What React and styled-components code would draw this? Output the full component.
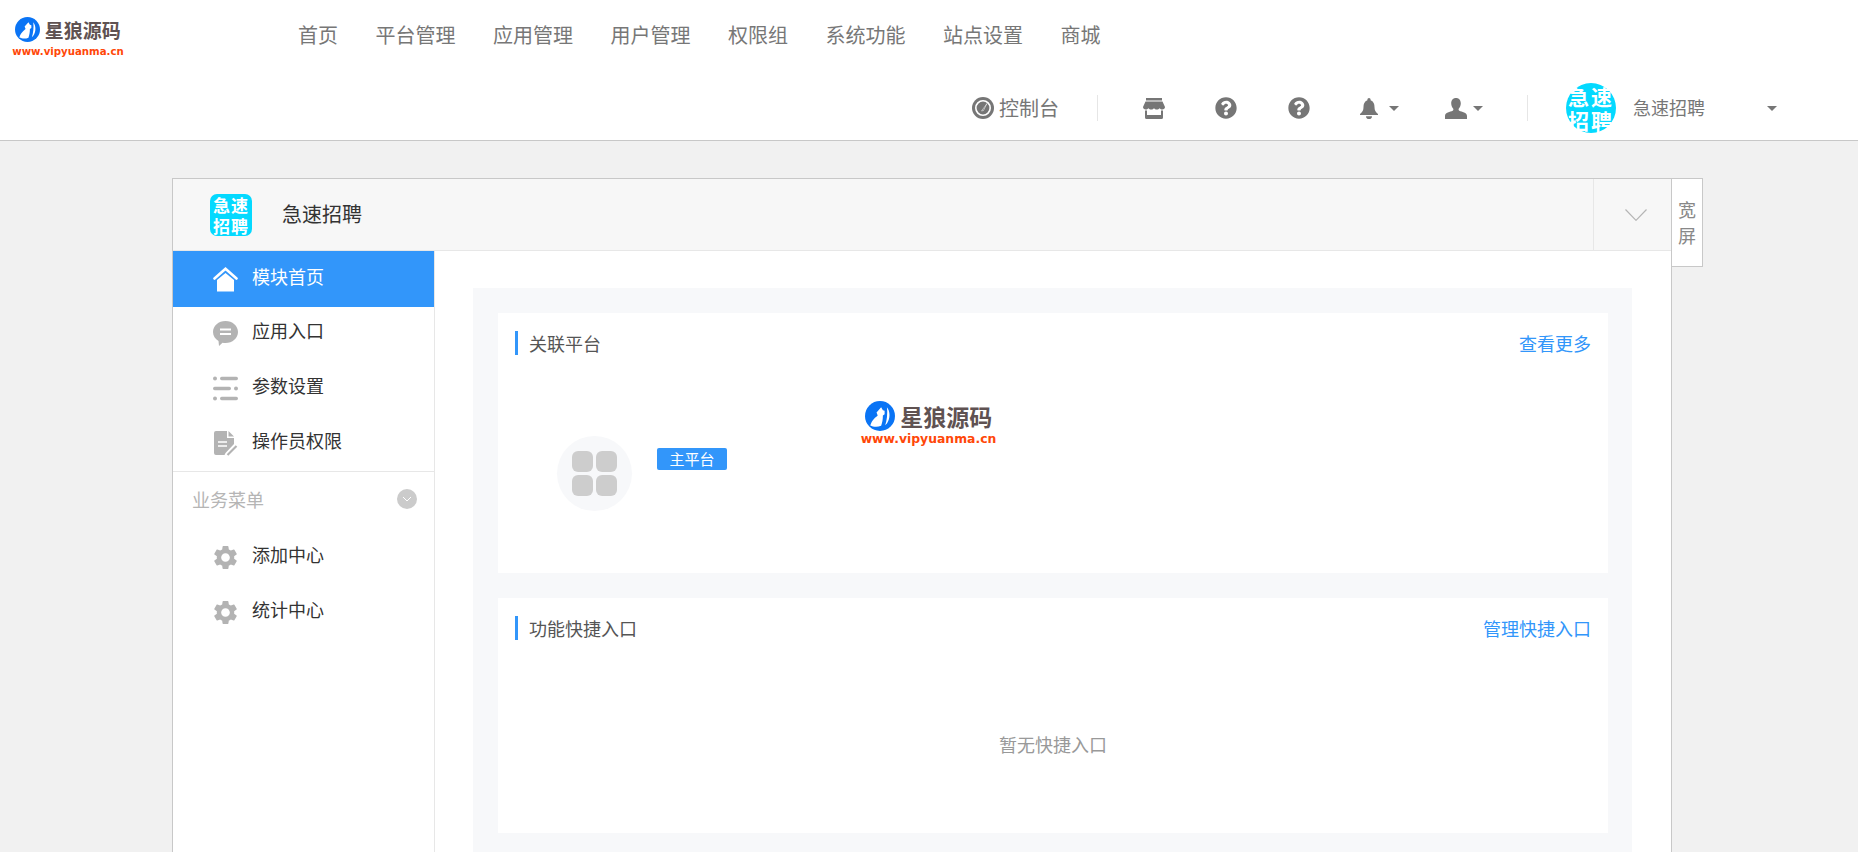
import styled, { createGlobalStyle } from 'styled-components'
import { FaQuestionCircle } from 'react-icons/fa'
import { MdSettings } from 'react-icons/md'

const blue = '#3296fa'
const iconGrey = '#767676'
const menuGrey = '#b3b3b3'

const GlobalStyle = createGlobalStyle`
    html, body {
        margin: 0;
        height: 100%;
        overflow: hidden;
        background: #f1f1f1;
    }
    body {
        font-family: 'Noto Sans CJK SC', 'Liberation Sans', sans-serif;
        color: #333;
    }
    * {
        box-sizing: border-box;
    }
`

const Page = styled.div`
    height: 100vh;
    overflow: hidden;
`

const Header = styled.header`
    height: 141px;
    background: #fff;
    border-bottom: 1px solid #c8c8c8;
`

const NavRow = styled.div`
    height: 70px;
    display: flex;
    align-items: center;
    padding: 0 0 2px 12px;
`

const HeaderLogo = styled.div`
    margin-top: 7px;
`

const Nav = styled.nav`
    display: flex;
    gap: 37.5px;
    margin-left: 174px;
    font-size: 20px;
    color: #777;
`

const ToolRow = styled.div`
    height: 70px;
    padding: 6px 81px 0 972px;
    display: flex;
    align-items: center;
`

const ConsoleLink = styled.span`
    display: flex;
    align-items: center;
    gap: 5px;
    font-size: 20px;
    color: #777;
`

const RaisedText = styled.span`
    margin-bottom: ${p => p.$by}px;
`

const ToolDivider = styled.span`
    width: 1px;
    height: 26px;
    background: #e6e6e6;
    margin-left: ${p => p.$left}px;
`

const ToolIcon = styled.span`
    display: flex;
    align-items: center;
    margin-left: ${p => p.$left}px;
    color: ${iconGrey};
`

const Caret = styled.i`
    width: 0;
    height: 0;
    margin-left: ${p => p.$left}px;
    border-left: 5.5px solid transparent;
    border-right: 5.5px solid transparent;
    border-top: 5.5px solid ${iconGrey};
`

const Avatar = styled.span`
    width: 50px;
    height: 50px;
    margin-left: 38px;
    flex: none;
    border-radius: 50%;
    background: #04d9ff;
    color: #fff;
    font-size: 21px;
    font-weight: 700;
    line-height: 24px;
    letter-spacing: 2px;
    display: flex;
    align-items: center;
    justify-content: center;
    text-align: center;
    white-space: pre-line;
`

const AccountName = styled.span`
    margin: 0 0 2px 17px;
    font-size: 18px;
    color: #777;
`

const Shell = styled.div`
    display: flex;
    align-items: flex-start;
    padding: 37px 0 0 172px;
`

const Card = styled.div`
    width: 1500px;
    background: #fff;
    border: 1px solid #c8c8c8;
`

const WideTab = styled.div`
    width: 31px;
    height: 89px;
    padding-top: 17px;
    background: #fff;
    border: 1px solid #c8c8c8;
    border-left: 0;
    text-align: center;
    font-size: 18px;
    line-height: 26px;
    color: #888;
`

const CardHead = styled.div`
    height: 72px;
    display: flex;
    align-items: center;
    padding-left: 37px;
    background: #f7f7f7;
    border-bottom: 1px solid #e7e7e7;
`

const AppLogo = styled.span`
    width: 42px;
    height: 42px;
    border-radius: 7px;
    background: #04d9ff;
    color: #fff;
    font-size: 17px;
    font-weight: 700;
    line-height: 21px;
    letter-spacing: 1px;
    text-align: center;
    display: flex;
    align-items: center;
    justify-content: center;
    white-space: pre-line;
`

const AppName = styled.span`
    margin: 0 0 2px 30px;
    font-size: 20px;
    color: #333;
`

const Collapse = styled.div`
    margin-left: auto;
    width: 78px;
    height: 100%;
    padding-left: 6px;
    display: flex;
    align-items: center;
    justify-content: center;
    border-left: 1px solid #e7e7e7;
`

const CardBody = styled.div`
    display: flex;
    min-height: 640px;
`

const Sidebar = styled.aside`
    width: 262px;
    flex: none;
    border-right: 1px solid #e7e7e7;
`

const MenuItem = styled.div`
    height: ${p => (p.$active ? 56 : 55)}px;
    padding-left: 40px;
    display: flex;
    align-items: center;
    gap: 14px;
    font-size: 18px;
    color: ${p => (p.$active ? '#fff' : '#333')};
    background: ${p => (p.$active ? blue : 'transparent')};
    margin-bottom: ${p => (p.$active ? -1 : 0)}px;
    svg {
        flex: none;
    }
`

const GroupTitle = styled.div`
    height: 59px;
    padding: 0 17px 4px 19px;
    border-top: 1px solid #e7e7e7;
    display: flex;
    align-items: center;
    justify-content: space-between;
    font-size: 18px;
    color: #b5b5b5;
`

const GroupToggle = styled.span`
    width: 20px;
    height: 20px;
    border-radius: 50%;
    background: #cbcbcb;
    display: flex;
    align-items: center;
    justify-content: center;
`

const GearIcon = styled(MdSettings)`
    margin: 0 -2px;
    color: ${menuGrey};
`

const Main = styled.main`
    flex: 1;
    padding: 37px 39px 0 38px;
`

const Panel = styled.div`
    display: flex;
    flex-direction: column;
    gap: 25px;
    padding: 25px 24px 60px 25px;
    background: #f7f8fa;
`

const Section = styled.section`
    position: relative;
    height: ${p => p.$height}px;
    padding: 18px 17px 0;
    display: flex;
    flex-direction: column;
    background: #fff;
`

const SectionHead = styled.div`
    display: flex;
    align-items: center;
    justify-content: space-between;
    height: 24px;
    font-size: 18px;
`

const SectionTitle = styled.span`
    padding-left: 11px;
    border-left: 3px solid ${blue};
    line-height: 24px;
    color: #555;
`

const SectionLink = styled.a`
    color: ${blue};
`

const PlatformRow = styled.div`
    display: flex;
    align-items: flex-start;
    gap: 25px;
    margin: 81px 0 0 42px;
`

const PlatformIcon = styled.span`
    width: 75px;
    height: 75px;
    border-radius: 50%;
    background: #f7f8fa;
    display: grid;
    grid-template-columns: 21px 21px;
    grid-template-rows: 21px 21px;
    gap: 3px;
    align-content: center;
    justify-content: center;
`

const PlatformDot = styled.i`
    border-radius: 6px;
    background: #cdcdcd;
`

const Badge = styled.span`
    margin-top: 12px;
    width: 70px;
    height: 22px;
    border-radius: 2px;
    background: ${blue};
    color: #fff;
    font-size: 15px;
    line-height: 22px;
    text-align: center;
`

const Empty = styled.div`
    flex: 1;
    padding-top: 14px;
    display: flex;
    align-items: center;
    justify-content: center;
    font-size: 18px;
    color: #999;
`

const Brand = styled.div`
    width: ${p => p.$width}px;
    display: flex;
    flex-direction: column;
    align-items: center;
    line-height: 1;
`

const BrandTop = styled.div`
    display: flex;
    align-items: center;
    gap: ${p => p.$size * 0.24}px;
    font-size: ${p => p.$size}px;
    font-weight: 700;
    color: #5f5252;
`

const BrandUrl = styled.div`
    margin-top: ${p => p.$gap}px;
    font-family: 'DejaVu Sans', sans-serif;
    font-size: ${p => p.$size}px;
    font-weight: 700;
    color: #ff4708;
    white-space: nowrap;
`

const Watermark = styled.div`
    position: absolute;
    left: 363px;
    top: 88px;
`

const BrandMark = ({ size }) => (
    <svg width={size} height={size} viewBox='0 0 26 26'>
        <circle cx='13' cy='13' r='13' fill='#0a74f5' />
        <path
            d='M4.5 21.5C6 16 9.5 14 11 12.5L10 10l4-4.500 1.500 2.500 1.500.5v3l-1.500 1c0 3.500-.5 6-1.500 9-3.500 1.500-7 1-9.500-.5z'
            fill='#fff'
        />
        <path d='M19 5.500c3 3.500 3 10 0 14l-1.500 1.500c1.500-4 2.200-10 1.500-15.500z' fill='#fff' />
    </svg>
)

const Logo = ({ width, mark, size, urlSize, gap }) => (
    <Brand $width={width}>
        <BrandTop $size={size}>
            <BrandMark size={mark} />
            <span>星狼源码</span>
        </BrandTop>
        <BrandUrl $size={urlSize} $gap={gap}>
            www.vipyuanma.cn
        </BrandUrl>
    </Brand>
)

const GaugeIcon = () => (
    <svg width='22' height='22' viewBox='0 0 22 22'>
        <circle cx='11' cy='11' r='11' fill={iconGrey} />
        <circle cx='11' cy='11' r='7.200' fill='none' stroke='#fff' strokeWidth='1.600' />
        <circle cx='11' cy='11' r='4' fill='none' stroke={iconGrey} strokeWidth='1.600' />
        <path d='M9.500 14 15 6.500 11.500 13.500z' fill={iconGrey} stroke='#fff' strokeWidth='.5' />
    </svg>
)

const ShopIcon = () => (
    <svg width='22' height='21' viewBox='0 0 22 21'>
        <path d='M3 0h16v2.500H3z' fill={iconGrey} />
        <path
            d='M2.500 3.500h17L22 9c0 1.500-1.200 2.500-2.700 2.500-1.100 0-1.900-.5-2.700-1.300-.7.800-1.600 1.300-2.800 1.300S11.700 11 11 10.200c-.7.800-1.600 1.300-2.800 1.300S6.100 11 5.400 10.200c-.8.800-1.600 1.300-2.700 1.300C1.200 11.500 0 10.500 0 9z'
            fill={iconGrey}
        />
        <path
            d='M2 12.500h2v4.500h14v-4.500h2V19.500a1.500 1.500 0 0 1-1.500 1.500h-15A1.500 1.500 0 0 1 2 19.500z'
            fill={iconGrey}
        />
    </svg>
)

const BellIcon = () => (
    <svg width='18' height='21' viewBox='0 0 18 21'>
        <path
            d='M9 0a1.600 1.600 0 0 1 1.600 1.600v.6C13.500 3.200 14.500 6 14.500 9c0 3.500 1 5 3.500 7v1H0v-1c2.500-2 3.500-3.500 3.500-7 0-3 1-5.800 3.900-6.800v-.6A1.600 1.600 0 0 1 9 0z'
            fill={iconGrey}
        />
        <path d='M6 18.200h6A3 2.800 0 0 1 6 18.200z' fill={iconGrey} />
    </svg>
)

const UserIcon = () => (
    <svg width='22' height='21' viewBox='0 0 22 21'>
        <path
            d='M11 0c3 0 4.800 2.200 4.800 5.300 0 2.200-.8 4-1.900 5.200-.5.700-.4 1.800.4 2.200 2.500 1.200 7.700 1.700 7.700 5.300v3H0v-3c0-3.600 5.200-4.100 7.700-5.300.8-.4.900-1.500.4-2.200C7 9.300 6.200 7.500 6.200 5.300 6.200 2.200 8 0 11 0z'
            fill={iconGrey}
        />
    </svg>
)

const HomeIcon = () => (
    <svg width='25' height='25' viewBox='0 0 25 25'>
        <path d='M1.500 11.500 12.500 1.800l11 9.700' fill='none' stroke='#fff' strokeWidth='2.600' strokeLinecap='round' />
        <path d='M4 13 12.500 6 21 13v11.500H4z' fill='#fff' />
    </svg>
)

const ChatIcon = () => (
    <svg width='25' height='25' viewBox='0 0 25 25'>
        <path
            d='M12.500 0C19.400 0 25 4.900 25 11s-5.600 11-12.500 11c-1 0-2-.1-3-.3L6 25l-.5-5C2.200 18 0 14.800 0 11 0 4.900 5.600 0 12.500 0z'
            fill={menuGrey}
        />
        <path d='M7 8.500h11M7 13h11' stroke='#fff' strokeWidth='1.800' />
    </svg>
)

const ListIcon = () => (
    <svg width='25' height='25' viewBox='0 0 25 25'>
        <g fill={menuGrey}>
            <circle cx='2' cy='2.500' r='2' />
            <rect x='7' y='.8' width='18' height='3.400' rx='1.700' />
            <rect y='10.800' width='18' height='3.400' rx='1.700' />
            <circle cx='23' cy='12.500' r='2' />
            <circle cx='2' cy='22.500' r='2' />
            <rect x='7' y='20.800' width='18' height='3.400' rx='1.700' />
        </g>
    </svg>
)

const DocIcon = () => (
    <svg width='25' height='25' viewBox='0 0 25 25'>
        <path d='M3 0h11v7h7v6l-8.500 9-1 2H3a2 2 0 0 1-2-2V2a2 2 0 0 1 2-2z' fill={menuGrey} />
        <path d='M15.500 0 21 5.500h-5.500z' fill={menuGrey} />
        <path d='M5 11h9M5 15h9' stroke='#fff' strokeWidth='1.600' />
        <path d='M14.500 24 23.500 15' stroke={menuGrey} strokeWidth='2.200' />
    </svg>
)

const SmallChevron = () => (
    <svg width='10' height='6' viewBox='0 0 10 6'>
        <path d='M1 1l4 4 4-4' fill='none' stroke='#fff' strokeWidth='1' />
    </svg>
)

const BigChevron = () => (
    <svg width='22' height='12' viewBox='0 0 22 12'>
        <path d='M.5.500 11 11.300 21.500.500' fill='none' stroke='#b5b5b5' strokeWidth='1.200' />
    </svg>
)

const navItems = ['首页', '平台管理', '应用管理', '用户管理', '权限组', '系统功能', '站点设置', '商城']

const mainMenu = [
    { label: '应用入口', icon: <ChatIcon /> },
    { label: '参数设置', icon: <ListIcon /> },
    { label: '操作员权限', icon: <DocIcon /> },
]

const bizMenu = ['添加中心', '统计中心']

export default function App() {
    return (
        <Page>
            <GlobalStyle />
            <Header>
                <NavRow>
                    <HeaderLogo>
                        <Logo width={112} mark={25} size={19} urlSize={10.2} gap={5} />
                    </HeaderLogo>
                    <Nav>
                        {navItems.map(item => (
                            <span key={item}>{item}</span>
                        ))}
                    </Nav>
                </NavRow>
                <ToolRow>
                    <ConsoleLink>
                        <GaugeIcon />
                        <RaisedText $by={2}>控制台</RaisedText>
                    </ConsoleLink>
                    <ToolDivider $left={38} />
                    <ToolIcon $left={45}>
                        <ShopIcon />
                    </ToolIcon>
                    <ToolIcon $left={50}>
                        <FaQuestionCircle size={22} />
                    </ToolIcon>
                    <ToolIcon $left={51}>
                        <FaQuestionCircle size={22} />
                    </ToolIcon>
                    <ToolIcon $left={50}>
                        <BellIcon />
                    </ToolIcon>
                    <Caret $left={11} />
                    <ToolIcon $left={46}>
                        <UserIcon />
                    </ToolIcon>
                    <Caret $left={6} />
                    <ToolDivider $left={44} />
                    <Avatar>{'急速\n招聘'}</Avatar>
                    <AccountName>急速招聘</AccountName>
                    <Caret $left={62} />
                </ToolRow>
            </Header>
            <Shell>
                <Card>
                    <CardHead>
                        <AppLogo>{'急速\n招聘'}</AppLogo>
                        <AppName>急速招聘</AppName>
                        <Collapse>
                            <BigChevron />
                        </Collapse>
                    </CardHead>
                    <CardBody>
                        <Sidebar>
                            <MenuItem $active>
                                <HomeIcon />
                                <RaisedText $by={7}>模块首页</RaisedText>
                            </MenuItem>
                            {mainMenu.map(item => (
                                <MenuItem key={item.label}>
                                    {item.icon}
                                    <RaisedText $by={7}>{item.label}</RaisedText>
                                </MenuItem>
                            ))}
                            <GroupTitle>
                                业务菜单
                                <GroupToggle>
                                    <SmallChevron />
                                </GroupToggle>
                            </GroupTitle>
                            {bizMenu.map(item => (
                                <MenuItem key={item}>
                                    <GearIcon size={29} />
                                    <RaisedText $by={7}>{item}</RaisedText>
                                </MenuItem>
                            ))}
                        </Sidebar>
                        <Main>
                            <Panel>
                                <Section $height={260}>
                                    <SectionHead>
                                        <SectionTitle>关联平台</SectionTitle>
                                        <SectionLink>查看更多</SectionLink>
                                    </SectionHead>
                                    <PlatformRow>
                                        <PlatformIcon>
                                            <PlatformDot />
                                            <PlatformDot />
                                            <PlatformDot />
                                            <PlatformDot />
                                        </PlatformIcon>
                                        <Badge>主平台</Badge>
                                    </PlatformRow>
                                    <Watermark>
                                        <Logo width={135} mark={30} size={23} urlSize={12.4} gap={2} />
                                    </Watermark>
                                </Section>
                                <Section $height={235}>
                                    <SectionHead>
                                        <SectionTitle>功能快捷入口</SectionTitle>
                                        <SectionLink>管理快捷入口</SectionLink>
                                    </SectionHead>
                                    <Empty>暂无快捷入口</Empty>
                                </Section>
                            </Panel>
                        </Main>
                    </CardBody>
                </Card>
                <WideTab>
                    宽
                    <br />屏
                </WideTab>
            </Shell>
        </Page>
    )
}
